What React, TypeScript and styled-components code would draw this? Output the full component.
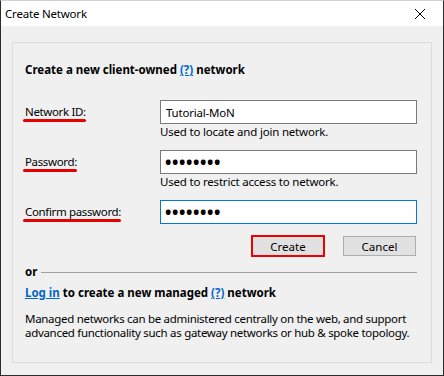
import styled, { createGlobalStyle } from 'styled-components';

const GlobalStyle = createGlobalStyle`
	html, body {
		margin: 0;
		padding: 0;
		background: #f0f0f0;
	}
	body {
		font-family: 'Noto Sans', 'Open Sans', sans-serif;
		font-size: 11.5px;
		letter-spacing: -0.2px;
		color: #000;
	}
`;

const Window = styled.div`
	box-sizing: border-box;
	width: 444px;
	height: 376px;
	display: flex;
	flex-direction: column;
	background: #f0f0f0;
	border: 1px solid #2b2b2b;
	border-top-color: #d0d0d0;
`;

const TitleBar = styled.div`
	display: flex;
	align-items: center;
	height: 25px;
	padding-left: 4px;
	background: #fff;

	> .title {
		flex: 1;
	}
	> .close {
		display: flex;
		align-items: center;
		justify-content: center;
		width: 46px;
		height: 100%;
	}
`;

const Body = styled.div`
	flex: 1;
	display: flex;
	padding: 16px 11px 12px 11px;
`;

const Panel = styled.div`
	flex: 1;
	display: flex;
	flex-direction: column;
	border: 1px solid #dcdcdc;
	padding: 14px 14px 0 12px;
`;

const Heading = styled.div`
	font-weight: 700;
	letter-spacing: 0;
	line-height: 16px;
	margin-top: 5px;
`;

const Help = styled.a`
	color: #0066cc;
	text-decoration: underline;
	cursor: pointer;
`;

const Form = styled.div`
	display: grid;
	grid-template-columns: 135px 1fr;
	margin-top: 22px;
	row-gap: 11px;
`;

const Label = styled.div`
	height: 24px;
	display: flex;
	align-items: center;
	letter-spacing: -0.35px;

	> span {
		position: relative;
		line-height: 14px;
	}
	> span::after {
		content: '';
		position: absolute;
		left: -2px;
		right: 0;
		bottom: -3px;
		height: 3px;
		border-radius: 2px;
		background: #e60000;
	}
`;

const Field = styled.div`
	display: flex;
	flex-direction: column;
`;

const Input = styled.div<{ $focused?: boolean; $secret?: boolean }>`
	box-sizing: border-box;
	height: 24px;
	display: flex;
	align-items: center;
	padding-left: ${(p) => (p.$secret ? '4px' : '5px')};
	background: #fff;
	border: 1px solid ${(p) => (p.$focused ? '#0078d7' : '#7a7a7a')};
	font-size: ${(p) => (p.$secret ? '17px' : '11.5px')};
	font-weight: ${(p) => (p.$secret ? 700 : 400)};
	letter-spacing: ${(p) => (p.$secret ? '0.6px' : '-0.2px')};
	overflow: hidden;
`;

const Hint = styled.div`
	line-height: 14px;
	margin-top: 1px;
`;

const Buttons = styled.div`
	display: flex;
	justify-content: flex-end;
	align-items: center;
	gap: 18px;
	margin-top: 11px;
	padding-right: 1px;
`;

const Button = styled.button<{ $marked?: boolean }>`
	box-sizing: border-box;
	width: ${(p) => (p.$marked ? '74px' : '73px')};
	height: ${(p) => (p.$marked ? '22px' : '20px')};
	padding: 0;
	background: #e1e1e1;
	border: ${(p) => (p.$marked ? '2px solid #f00000' : '1px solid #adadad')};
	font: inherit;
	color: #000;
`;

const Divider = styled.div`
	display: flex;
	align-items: center;
	gap: 4px;
	margin-top: 7px;
	font-weight: 700;
	letter-spacing: 0;
	line-height: 16px;

	&::after {
		content: '';
		flex: 1;
		height: 1px;
		background: #a0a0a0;
	}
`;

const Description = styled.p`
	margin: 11px 0 0;
	line-height: 14px;
	letter-spacing: -0.3px;
`;

const CloseIcon = () => (
	<svg width="12" height="12" viewBox="0 0 12 12">
		<path d="M1 1L11 11M11 1L1 11" stroke="#000" strokeWidth="1" />
	</svg>
);

export default function App() {
	return (
		<>
			<GlobalStyle />
			<Window>
				<TitleBar>
					<span className="title">Create Network</span>
					<span className="close">
						<CloseIcon />
					</span>
				</TitleBar>
				<Body>
					<Panel>
						<Heading>
							Create a new client-owned <Help>(?)</Help> network
						</Heading>
						<Form>
							<Label>
								<span>Network ID:</span>
							</Label>
							<Field>
								<Input>Tutorial-MoN</Input>
								<Hint>Used to locate and join network.</Hint>
							</Field>
							<Label>
								<span>Password:</span>
							</Label>
							<Field>
								<Input $secret>••••••••</Input>
								<Hint>Used to restrict access to network.</Hint>
							</Field>
							<Label>
								<span>Confirm password:</span>
							</Label>
							<Field>
								<Input $secret $focused>
									••••••••
								</Input>
							</Field>
						</Form>
						<Buttons>
							<Button $marked>Create</Button>
							<Button>Cancel</Button>
						</Buttons>
						<Divider>or</Divider>
						<Heading>
							<Help>Log in</Help> to create a new managed <Help>(?)</Help> network
						</Heading>
						<Description>
							Managed networks can be administered centrally on the web, and support
							<br />
							advanced functionality such as gateway networks or hub &amp; spoke topology.
						</Description>
					</Panel>
				</Body>
			</Window>
		</>
	);
}
